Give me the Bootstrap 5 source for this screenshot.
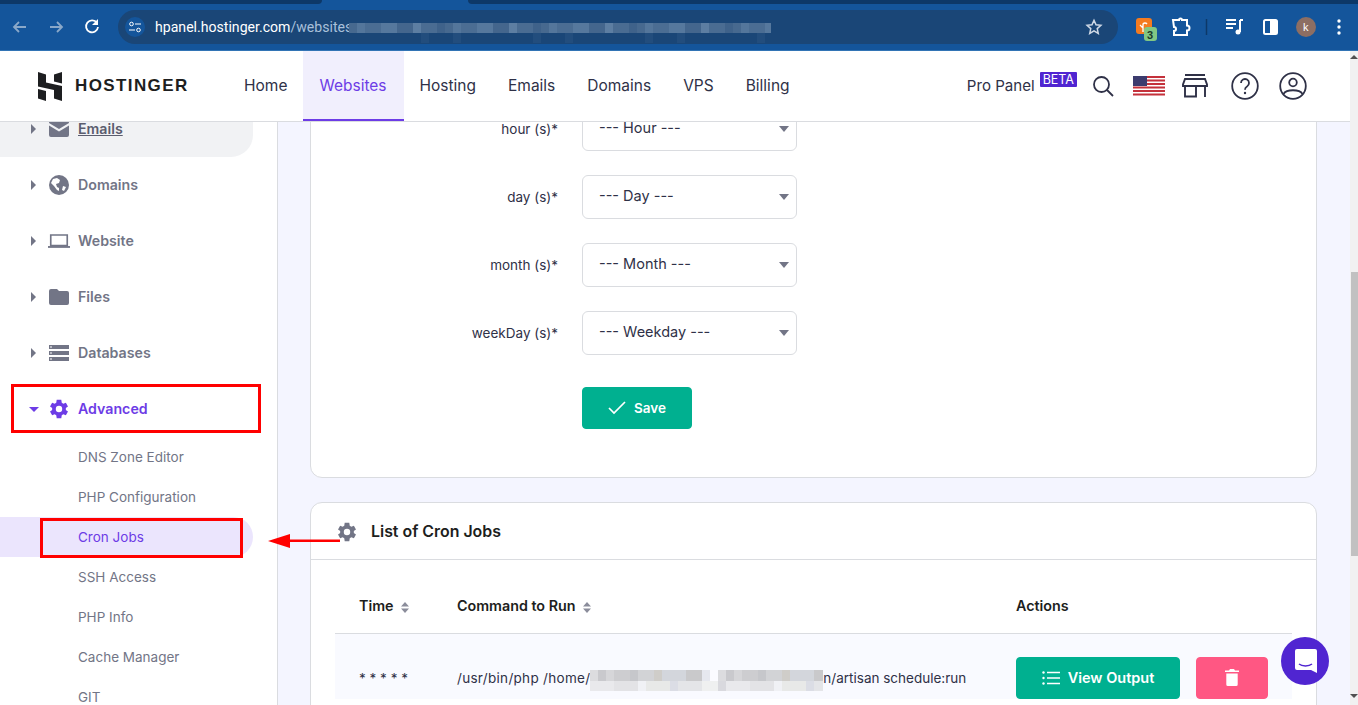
<!DOCTYPE html>
<html lang="en">
<head>
<meta charset="utf-8">
<title>Hostinger cron jobs</title>
<link href="https://cdn.jsdelivr.net/npm/bootstrap@5.3.0/dist/css/bootstrap.min.css" rel="stylesheet">
<style>
:root{--ink:#2f3147;--mute:#727586;--violet:#6d3ce6;--line:#dadce0;}
html,body{height:705px;overflow:hidden;}
body{font-family:"Inter","Liberation Sans",sans-serif;color:var(--ink);background:#f4f5ff;position:relative;}
.chrome-bar{height:51px;background:#14559b;border-bottom:1px solid #3274b5;flex:none;position:relative;}
.tabstrip{height:4px;}
.tab-dark{background:#0d3868;}
.tab-d1{width:322px;border-bottom-right-radius:4px;}
.tab-d2{flex:1;border-bottom-left-radius:4px;margin-left:146px;}
.omni{height:34px;width:1000px;margin-left:118px;background:#1a4677;border-radius:17px;margin-top:6px;color:#fff;font:14.1px "Roboto",sans-serif;}
.tune{width:20px;height:20px;margin:0 6px 0 7px;border-radius:50%;background:#14559b;}
.path-dim{color:#a9c0da;}
.url-blur{width:422px;height:20px;margin:12px 0 0 -3px;
 background:
 repeating-linear-gradient(90deg,#47698f 0 8px,#54769b 8px 16px,#4b6d93 16px 32px,#56789d 32px 48px,#44668d 48px 64px,#5d7ea2 64px 72px,#4a6c92 72px 88px,#3f628a 88px 96px) 0 0/100% 10px no-repeat,
 repeating-linear-gradient(90deg,#1a4677 0 72px,#224d7d 72px 80px,#1a4677 80px 104px,#224d7d 104px 112px) 0 10px/100% 10px no-repeat;}
.cbtn{flex:none;}
.page-row{flex:1;min-height:0;}
.page-col{flex:1;min-width:0;}
.site-head{height:71px;background:#fff;border-bottom:1px solid var(--line);flex:none;}
.brand{width:228px;padding-left:38px;gap:13px;}
.brand-text{font:700 17px "Liberation Sans",sans-serif;letter-spacing:1.4px;color:#1d1e20;}
.mainnav a{display:flex;align-items:center;height:70px;padding:0 16px;color:var(--ink);font-size:15.5px;text-decoration:none;}
.mainnav a.on{background:#f1effd;color:var(--violet);box-shadow:inset 0 -2px 0 var(--violet);padding-right:17px;}
.pro{font-size:15.1px;color:var(--ink);margin-right:5px;}
.beta{background:#5025d1;color:#fff;font-size:12.5px;line-height:15px;padding:0 3px;margin-right:15px;margin-top:-14px;border-radius:1px;}
.head-icons{gap:0;padding-right:43px;}
.body-row{flex:1;min-height:0;}
.side{width:278px;flex:none;background:#fff;border-right:1px solid var(--line);overflow:hidden;}
.side-in{margin-top:-21px;}
.sitem{height:56px;padding-left:31px;gap:8px;font-size:14.2px;line-height:1;font-weight:600;color:var(--mute);width:253px;}
.sitem.gray{background:#f1f2f4;border-bottom-right-radius:22px;}
.sitem.gray u{color:#5b5d6e;}
.sitem.open{color:var(--violet);}
.caret-r{width:0;height:0;border:5px solid transparent;border-left:5px solid var(--mute);border-right:0;margin-right:4px;}
.caret-d{width:0;height:0;border:5px solid transparent;border-top:5px solid var(--violet);border-bottom:0;margin:0 1px 0 -2px;}
.sub{height:40px;padding-left:78px;font-size:13.5px;color:var(--mute);display:flex;align-items:center;width:253px;}
.sub.on{background:#ebe5fd;color:var(--violet);border-radius:0 20px 20px 0;}
.main-col{flex:1;min-width:0;padding:0 33px 0 32px;overflow:hidden;}
.panel{background:#fff;border:1px solid var(--line);border-radius:12px;}
.panel-form{margin-top:-40px;padding:24px 0 48px;height:396px;}
.frow{margin-bottom:24px;height:44px;}
.flabel{width:247px;text-align:right;font-size:13.5px;margin:0 24px 0 0;}
.fsel{width:215px;height:44px;font-size:14.5px;padding:0 30px 2px 16px;color:var(--ink);border-color:var(--line);background-image:url("data:image/svg+xml,%3Csvg xmlns='http://www.w3.org/2000/svg' width='10' height='6'%3E%3Cpath d='M0 0h10L5 6z' fill='%23727586'/%3E%3C/svg%3E");background-size:10px 6px;background-position:right 7px center;}
.save-row{padding-left:271px;margin-top:32px;}
.gbtn{background:#00b090;border-color:#00b090;color:#fff;font-weight:600;font-size:13.5px;border-radius:4px;}
.gbtn:hover{background:#00b090;color:#fff;}
.bsave{width:110px;height:42px;gap:8px;}
.panel-list{margin-top:24px;height:300px;}
.list-head{height:57px;padding:1px 0 0 25px;border-bottom:1px solid var(--line);gap:13px;font-weight:600;font-size:15.9px;color:#1d1e20;}
.cron-wrap{padding:23px 24px 0;}
.cron{margin:0;}
.cron th{height:50px;font-size:14.3px;font-weight:600;color:#1d1e20;padding:0 0 4px 24px;border-bottom:1px solid var(--line);vertical-align:middle;}
.cron td{background:#f9faff;font-size:13.5px;padding:34px 0 0 24px;border:0;vertical-align:top;color:var(--ink);}
.c1{width:98px;}.c2{width:559px;}
.sort-ic{margin-left:4px;}
.cmd-a{letter-spacing:.3px;}
.path-blur{display:inline-block;width:233px;height:21px;vertical-align:-8px;
 background:
 repeating-linear-gradient(90deg,#dcdcdf 0 8px,#c9c9cd 8px 16px,#d6d6d9 16px 24px,#cdcdd0 24px 40px,#c6c7cb 40px 48px,#d2d3d6 48px 64px,#cfcdc9 64px 72px,#d3d6dc 72px 96px,#c9c9cb 96px 112px,#e6e8ef 112px 120px,#fbfbff 120px 128px) 0 0/100% 11px no-repeat,
 repeating-linear-gradient(90deg,#e9e9ec 0 24px,#e3e3e6 24px 48px,#f0f1f5 48px 56px,#e8e9e8 56px 80px,#dbdde5 80px 88px,#e4e5e8 88px 112px,#eff0f0 112px 128px,#d9d9de 128px 136px) 0 11px/100% 10px no-repeat;}
.bview{width:164px;height:42px;gap:8px;font-size:14.5px;}
.bdel{width:72px;height:42px;background:#ff5783;border-color:#ff5783;border-radius:4px;margin-left:16px;}
.bdel:hover{background:#ff5783;}
.cron td.act-cell{padding-top:23px;}
.sbar{width:8px;flex:none;background:#f1f1f1;position:relative;padding-top:4px;}
.sb-up{width:0;height:0;border:4px solid transparent;border-bottom:4px solid #505050;border-top:0;}
.sb-down{width:0;height:0;border:4px solid transparent;border-top:4px solid #505050;border-bottom:0;margin-top:138px;}
.sthumb{height:284px;background:#c1c1c1;margin:213px 0 0 1px;}
.chat{position:absolute;left:1281px;top:637px;width:48px;height:48px;border-radius:50%;background:#5025d1;}
.mark-box{position:absolute;border:3px solid #f00;}
.mb1{left:11px;top:384px;width:250px;height:49px;}
.mb2{left:40px;top:518px;width:203px;height:40px;}
.mark-arrow{position:absolute;left:266px;top:531px;}
</style>
</head>
<body class="d-flex flex-column">
<div class="chrome-bar">
  <div class="tabstrip d-flex"><div class="tab-dark tab-d1"></div><div class="tab-dark tab-d2"></div></div>
  <div class="d-flex position-absolute" style="left:0;top:4px;height:46px;width:118px">
    <svg width="118" height="46" viewBox="0 0 118 46" class="cbtn">
      <path d="M26 23H14m5-5l-5 5 5 5" fill="none" stroke="#8aa8c9" stroke-width="1.8"/>
      <path d="M50 23h12m-5-5l5 5-5 5" fill="none" stroke="#8aa8c9" stroke-width="1.8"/>
      <path d="M97 19a6 6 0 1 0 1 4" fill="none" stroke="#fff" stroke-width="1.8"/><path d="M98 15v6h-6z" fill="#fff"/>
    </svg>
  </div>
  <div class="omni d-flex align-items-center">
    <div class="tune d-flex align-items-center justify-content-center">
      <svg width="14" height="12" viewBox="0 0 14 12"><circle cx="3.5" cy="3" r="1.8" fill="none" stroke="#fff"/><path d="M7 3h6M1 9h6" stroke="#fff" stroke-width="1.2"/><circle cx="10.5" cy="9" r="1.8" fill="none" stroke="#fff"/></svg>
    </div>
    <span style="margin-left:4px">hpanel.hostinger.com<span class="path-dim">/websites</span></span>
    <div class="url-blur"></div>
    <svg class="ms-auto" style="margin-right:15px" width="18" height="18" viewBox="0 0 24 24"><path d="M12 3l2.7 6 6.5.7-4.9 4.4 1.4 6.4L12 17.2l-5.7 3.3 1.4-6.4-4.9-4.4 6.5-.7z" fill="none" stroke="#cfd9e6" stroke-width="2"/></svg>
  </div>
  <div class="position-absolute d-flex align-items-center" style="left:1130px;top:4px;height:46px">
    <svg width="228" height="46" viewBox="0 0 228 46">
      <rect x="6" y="14" width="16" height="16" rx="3" fill="#f47b20"/>
      <path d="M13 28v-8a2.500 2.500 0 0 1 4 0M10 21l3 3" fill="none" stroke="#fff" stroke-width="1.300"/>
      <rect x="14" y="23" width="13" height="14" rx="3" fill="#81c784"/>
      <text x="17" y="34.500" font-family="Liberation Sans" font-size="11" font-weight="700" fill="#1b3a2a">3</text>
      <path d="M43 16h6a1.500 1.500 0 0 1 3 0h5v5.500a2.500 2.500 0 0 1 0 5V31H44v-4a2 2 0 0 0 0-4z" fill="none" stroke="#fff" stroke-width="2"/>
      <path d="M76.500 15v16" stroke="#0d3868" stroke-width="1.500"/>
      <path d="M96 16h10M96 20h10M96 24h7" stroke="#fff" stroke-width="1.800"/><path d="M110 16v12" stroke="#fff" stroke-width="2"/><circle cx="108" cy="28" r="2.500" fill="#fff"/><path d="M110 16h3" stroke="#fff" stroke-width="2"/>
      <rect x="134" y="16" width="13" height="14" rx="1.500" fill="none" stroke="#fff" stroke-width="2"/><rect x="140" y="16" width="7" height="14" fill="#fff"/>
      <circle cx="176" cy="23" r="10" fill="#8d6e63"/><text x="173" y="27" font-family="Liberation Sans" font-size="11" fill="#fff">k</text>
      <circle cx="209" cy="17" r="1.700" fill="#fff"/><circle cx="209" cy="23" r="1.700" fill="#fff"/><circle cx="209" cy="29" r="1.700" fill="#fff"/>
    </svg>
  </div>
</div>

<div class="page-row d-flex">
<div class="page-col d-flex flex-column">
<header class="site-head d-flex align-items-center">
  <div class="brand d-flex align-items-center">
    <svg width="24" height="29" viewBox="0 0 24 29"><path d="M0 0l8 2.500v8l16 3.500V29l-8-2.500V18L0 14.500zM16 2.500L24 0v11.500l-8-2zM0 17l8 2v10l-8-2.500z" fill="#1d1e20"/></svg>
    <span class="brand-text">HOSTINGER</span>
  </div>
  <nav class="mainnav d-flex">
    <a href="#">Home</a><a href="#" class="on">Websites</a><a href="#">Hosting</a><a href="#">Emails</a><a href="#">Domains</a><a href="#">VPS</a><a href="#">Billing</a>
  </nav>
  <div class="d-flex align-items-center ms-auto head-icons">
    <span class="pro">Pro Panel</span><span class="beta">BETA</span>
    <svg width="22" height="22" viewBox="0 0 22 22" style="margin-right:19px"><circle cx="9.500" cy="9.500" r="7.500" fill="none" stroke="#2f3147" stroke-width="1.800"/><path d="M15 15l6 6" stroke="#2f3147" stroke-width="1.800"/></svg>
    <svg width="32" height="20" viewBox="0 0 32 20" style="margin-right:17px"><rect width="32" height="20" rx="2" fill="#fff"/><path d="M0 1h32M0 4.500h32M0 8h32M0 11.500h32M0 15h32M0 18.500h32" stroke="#c4313b" stroke-width="1.800"/><rect width="14" height="10" fill="#3c3b6e"/></svg>
    <svg width="26" height="24" viewBox="0 0 26 24" style="margin-right:23px"><path d="M3 1h20M3 5h20l2 5.500v1.500H1v-1.500zM3 12v10.500h11V12M23 12v11" fill="none" stroke="#2f3147" stroke-width="1.900"/></svg>
    <svg width="28" height="28" viewBox="0 0 28 28" style="margin-right:20px"><circle cx="14" cy="14" r="12.800" fill="none" stroke="#2f3147" stroke-width="1.800"/><path d="M10 11a4 4 0 1 1 6 3.500c-1.500.8-2 1.500-2 3.200" fill="none" stroke="#2f3147" stroke-width="1.800"/><circle cx="14" cy="21" r="1.200" fill="#2f3147"/></svg>
    <svg width="28" height="28" viewBox="0 0 28 28"><circle cx="14" cy="14" r="12.800" fill="none" stroke="#2f3147" stroke-width="1.800"/><circle cx="14" cy="10.500" r="3.800" fill="none" stroke="#2f3147" stroke-width="1.800"/><path d="M4.500 22c3-5 16-5 19 0" fill="none" stroke="#2f3147" stroke-width="1.800"/></svg>
  </div>
</header>

<div class="body-row d-flex">
  <aside class="side">
    <div class="side-in">
      <div class="sitem gray d-flex align-items-center"><i class="caret-r"></i><svg width="22" height="16" viewBox="0 0 20 16"><path d="M2 0h16a2 2 0 0 1 2 2L10 8 0 2a2 2 0 0 1 2-2zM0 4.500l10 6 10-6V14a2 2 0 0 1-2 2H2a2 2 0 0 1-2-2z" fill="#727586"/></svg><u>Emails</u></div>
      <div class="sitem d-flex align-items-center"><i class="caret-r"></i><svg width="22" height="20" viewBox="0 0 20 20"><circle cx="10" cy="10" r="10" fill="#727586"/><path d="M4 4l4-1 3 2-1 3-3 1 1 3 2 1v3l-2-1-3-4-3-3zM14 11l3 1-2 4-2-1z" fill="#fff"/></svg><span>Domains</span></div>
      <div class="sitem d-flex align-items-center"><i class="caret-r"></i><svg width="22" height="16" viewBox="0 0 24 16"><path d="M3 1.500h18V13H3z" fill="none" stroke="#727586" stroke-width="1.800"/><path d="M0 14.500h24" stroke="#727586" stroke-width="2"/></svg><span>Website</span></div>
      <div class="sitem d-flex align-items-center"><i class="caret-r"></i><svg width="22" height="16" viewBox="0 0 20 16"><path d="M2 0h6l2 2h8a2 2 0 0 1 2 2v10a2 2 0 0 1-2 2H2a2 2 0 0 1-2-2V2a2 2 0 0 1 2-2z" fill="#727586"/></svg><span>Files</span></div>
      <div class="sitem d-flex align-items-center"><i class="caret-r"></i><svg width="22" height="16" viewBox="0 0 20 16"><path d="M0 0h20v4H0zM0 6h20v4H0zM0 12h20v4H0z" fill="#727586"/><path d="M1 1.500h2v1H1zM1 7.500h2v1H1zM1 13.500h2v1H1z" fill="#fff"/></svg><span>Databases</span></div>
      <div class="sitem open d-flex align-items-center"><i class="caret-d"></i><svg width="22" height="22" viewBox="0 0 24 24"><path d="M19.400 13c.1-.3.100-.7.100-1s0-.7-.1-1l2.400-1.800-2.300-4-2.800 1.100c-.5-.4-1.100-.7-1.700-1L14.500 2h-5l-.5 3.300c-.6.300-1.200.6-1.700 1L4.500 5.200l-2.300 4L4.600 11c-.1.300-.1.700-.1 1s0 .7.1 1l-2.400 1.800 2.300 4 2.800-1.100c.5.4 1.100.7 1.700 1l.5 3.300h5l.5-3.300c.6-.3 1.200-.6 1.700-1l2.800 1.100 2.300-4zM12 15.500a3.500 3.500 0 1 1 0-7 3.500 3.500 0 0 1 0 7z" fill="#6d3ce6"/></svg><span>Advanced</span></div>
      <div>
        <div class="sub">DNS Zone Editor</div>
        <div class="sub">PHP Configuration</div>
        <div class="sub on">Cron Jobs</div>
        <div class="sub">SSH Access</div>
        <div class="sub">PHP Info</div>
        <div class="sub">Cache Manager</div>
        <div class="sub">GIT</div>
      </div>
    </div>
  </aside>

  <main class="main-col">
    <section class="panel panel-form">
      <div class="frow d-flex align-items-center"><label class="flabel">hour (s)*</label><select class="form-select fsel"><option>--- Hour ---</option></select></div>
      <div class="frow d-flex align-items-center"><label class="flabel">day (s)*</label><select class="form-select fsel"><option>--- Day ---</option></select></div>
      <div class="frow d-flex align-items-center"><label class="flabel">month (s)*</label><select class="form-select fsel"><option>--- Month ---</option></select></div>
      <div class="frow d-flex align-items-center"><label class="flabel">weekDay (s)*</label><select class="form-select fsel"><option>--- Weekday ---</option></select></div>
      <div class="save-row"><button class="btn gbtn bsave d-inline-flex align-items-center justify-content-center"><svg width="18" height="14" viewBox="0 0 18 14"><path d="M1 7l5 5L17 1" fill="none" stroke="#fff" stroke-width="1.700"/></svg>Save</button></div>
    </section>
    <section class="panel panel-list">
      <div class="list-head d-flex align-items-center"><svg width="22" height="22" viewBox="0 0 24 24"><path d="M19.400 13c.1-.3.100-.7.100-1s0-.7-.1-1l2.400-1.800-2.300-4-2.800 1.100c-.5-.4-1.100-.7-1.700-1L14.500 2h-5l-.5 3.300c-.6.300-1.200.6-1.700 1L4.500 5.200l-2.300 4L4.600 11c-.1.300-.1.700-.1 1s0 .7.1 1l-2.400 1.800 2.300 4 2.800-1.100c.5.4 1.100.7 1.700 1l.5 3.300h5l.5-3.300c.6-.3 1.200-.6 1.700-1l2.800 1.100 2.300-4zM12 15.500a3.500 3.500 0 1 1 0-7 3.500 3.500 0 0 1 0 7z" fill="#727586"/></svg>List of Cron Jobs</div>
      <div class="cron-wrap">
        <table class="table cron">
          <thead><tr>
            <th class="c1">Time <svg class="sort-ic" width="8" height="11" viewBox="0 0 8 11"><path d="M4 0l4 4.500H0zM4 11L0 6.500h8z" fill="#8b8d9b"/></svg></th>
            <th class="c2">Command to Run <svg class="sort-ic" width="8" height="11" viewBox="0 0 8 11"><path d="M4 0l4 4.500H0zM4 11L0 6.500h8z" fill="#8b8d9b"/></svg></th>
            <th>Actions</th>
          </tr></thead>
          <tbody><tr>
            <td>* * * * *</td>
            <td><span class="cmd-a">/usr/bin/php /home/</span><span class="path-blur"></span>n/artisan schedule:run</td>
            <td class="act-cell"><div class="d-flex"><button class="btn gbtn bview d-inline-flex align-items-center justify-content-center"><svg width="18" height="14" viewBox="0 0 18 14"><path d="M5 1.500h13M5 7h13M5 12.500h13" stroke="#fff" stroke-width="1.500"/><circle cx="1.500" cy="1.500" r="1.200" fill="#fff"/><circle cx="1.500" cy="7" r="1.200" fill="#fff"/><circle cx="1.500" cy="12.500" r="1.200" fill="#fff"/></svg>View Output</button><button class="btn bdel d-inline-flex align-items-center justify-content-center"><svg width="14" height="17" viewBox="0 0 14 17"><path d="M5 0h4l1 1.500h4V3H0V1.500h4zM1.300 4.500h11.400V15.500a1.500 1.500 0 0 1-1.500 1.500H2.800a1.500 1.500 0 0 1-1.500-1.500z" fill="#fff"/></svg></button></div></td>
          </tr></tbody>
        </table>
      </div>
    </section>
  </main>
</div>
</div>
<div class="sbar"><div class="sb-up"></div><div class="sthumb"></div><div class="sb-down"></div></div>
</div>

<div class="chat d-flex align-items-center justify-content-center"><svg width="24" height="26" viewBox="0 0 24 26"><path d="M4 1h18a2 2 0 0 1 2 2v22l-6-3H4a2 2 0 0 1-2-2V3a2 2 0 0 1 2-2z" fill="#fff"/><path d="M6 16c3 2.500 10 2.500 13 0" fill="none" stroke="#5025d1" stroke-width="1.500"/></svg></div>
<div class="mark-box mb1"></div>
<div class="mark-box mb2"></div>
<svg class="mark-arrow" width="76" height="20" viewBox="0 0 76 20"><path d="M2 10L24 3v5.500h50v2.500H24v6z" fill="#f00"/></svg>
<script src="https://cdn.jsdelivr.net/npm/bootstrap@5.3.0/dist/js/bootstrap.bundle.min.js"></script>
</body>
</html>
